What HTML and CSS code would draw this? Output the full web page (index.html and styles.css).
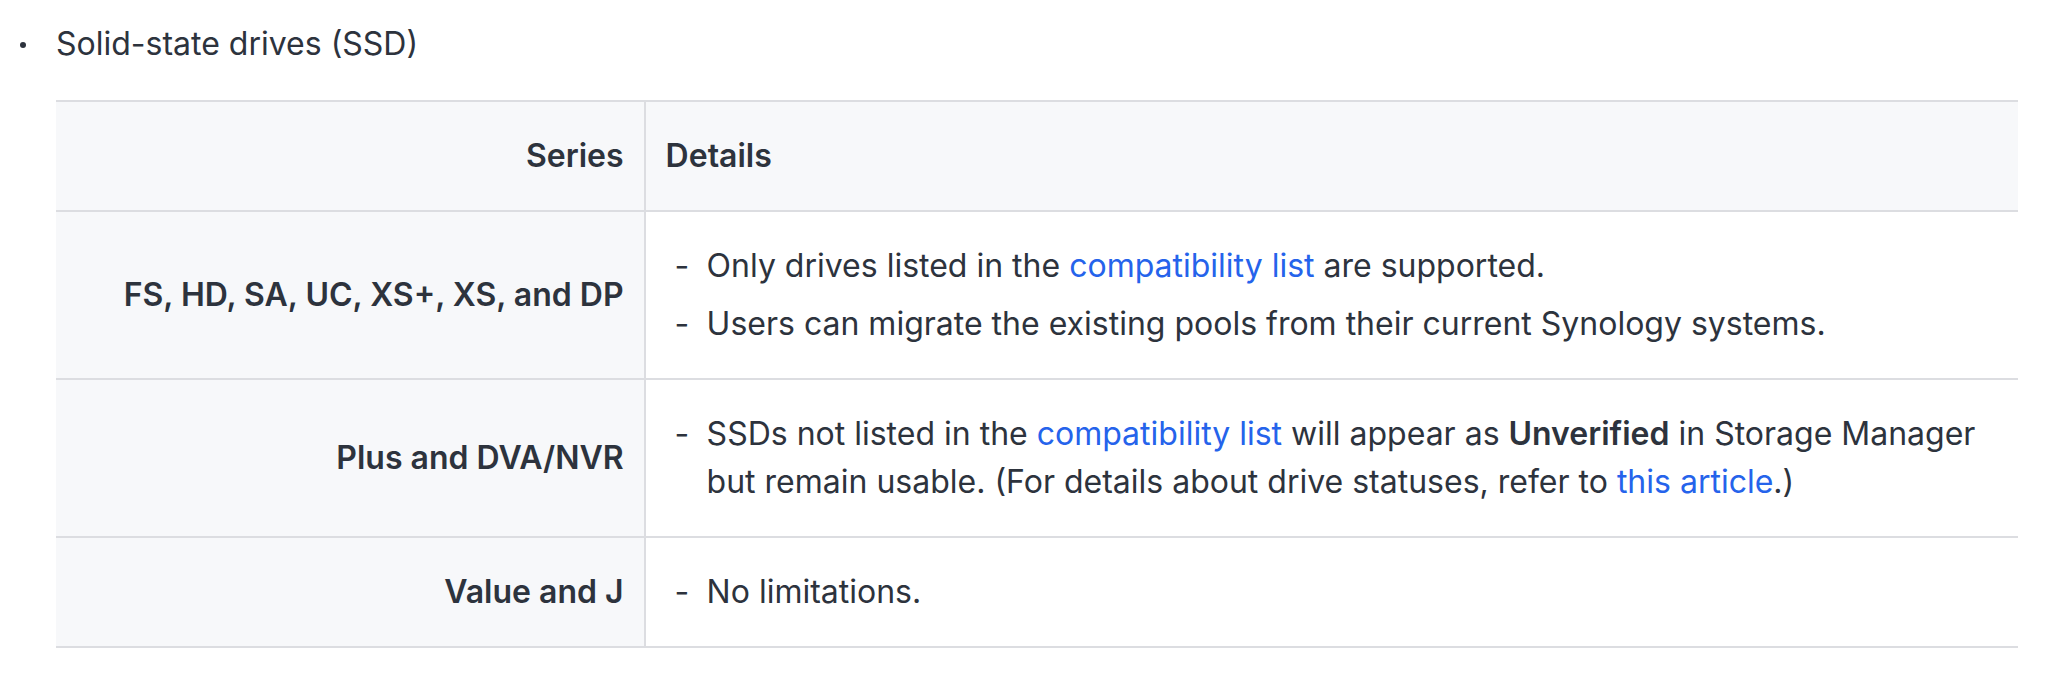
FILE: index.html
```html
<!DOCTYPE html>
<html lang="en">
<head>
<meta charset="utf-8">
<title>Solid-state drives</title>
<link rel="stylesheet" href="styles.css">
</head>
<body>
<div class="page">
  <ul class="outer-list">
    <li class="outer-item">
      <p class="item-title">Solid-state drives (SSD)</p>
      <table class="spec-table">
        <colgroup>
          <col class="col-series">
          <col class="col-details">
        </colgroup>
        <thead>
          <tr>
            <th class="cell-series">Series</th>
            <th class="cell-details">Details</th>
          </tr>
        </thead>
        <tbody>
          <tr>
            <td class="cell-series">FS, HD, SA, UC, XS+, XS, and DP</td>
            <td class="cell-details">
              <ul class="dash-list spaced">
                <li>Only drives listed in the <a href="#">compatibility list</a> are supported.</li>
                <li>Users can migrate the existing pools from their current Synology systems.</li>
              </ul>
            </td>
          </tr>
          <tr>
            <td class="cell-series">Plus and DVA/NVR</td>
            <td class="cell-details">
              <ul class="dash-list">
                <li>SSDs not listed in the <a href="#">compatibility list</a> will appear as <strong>Unverified</strong> in Storage Manager but remain usable. (For details about drive statuses, refer to <a href="#">this article</a>.)</li>
              </ul>
            </td>
          </tr>
          <tr>
            <td class="cell-series">Value and J</td>
            <td class="cell-details">
              <ul class="dash-list">
                <li>No limitations.</li>
              </ul>
            </td>
          </tr>
        </tbody>
      </table>
    </li>
  </ul>
</div>
</body>
</html>
```

FILE: styles.css
```css
html, body {
  margin: 0;
  padding: 0;
  background: #ffffff;
}

body {
  font-family: Inter, "Noto Sans", "Liberation Sans", sans-serif;
  font-size: 32px;
  line-height: 48px;
  color: #2d333d;
}

.page {
  padding: 20px 48px 0 0;
}

.outer-list {
  list-style: none;
  margin: 0;
  padding: 0 0 0 56px;
}

.outer-item {
  position: relative;
}

.outer-item::before {
  content: "";
  position: absolute;
  left: -36px;
  top: 22px;
  width: 6px;
  height: 6px;
  border-radius: 50%;
  background: #2d333d;
}

.item-title {
  margin: 0;
}

.spec-table {
  width: 100%;
  margin-top: 32px;
  border-collapse: collapse;
  table-layout: fixed;
}

.col-series {
  width: 30%;
}

.spec-table th,
.spec-table td {
  padding: 30px 20px;
  border-top: 2px solid #dcdde1;
  border-bottom: 2px solid #dcdde1;
  vertical-align: middle;
}

.spec-table thead th {
  background: #f7f8fa;
  font-weight: 600;
}

.spec-table .cell-series {
  text-align: right;
  font-weight: 600;
  background: #f7f8fa;
  border-right: 2px solid #dcdde1;
}

.spec-table .cell-details {
  text-align: left;
}

.spec-table thead .cell-details {
  background: #f7f8fa;
}

.dash-list {
  list-style: none;
  margin: 0;
  padding: 0;
}

.dash-list li {
  position: relative;
  padding-left: 41px;
}

.dash-list li::before {
  content: "-";
  position: absolute;
  left: 9px;
  top: 0;
}

.dash-list.spaced li + li {
  margin-top: 10px;
}

.dash-list a {
  color: #2563eb;
  text-decoration: none;
}

.dash-list strong {
  font-weight: 600;
}
```
